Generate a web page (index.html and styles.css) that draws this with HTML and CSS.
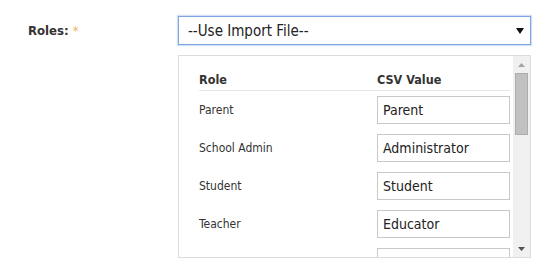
FILE: index.html
```html
<!DOCTYPE html>
<html lang="en">
<head>
<meta charset="utf-8">
<title>Roles</title>
<link rel="stylesheet" href="styles.css">
</head>
<body>
<div class="field">
  <label class="field-label">Roles: <span class="req">*</span></label>
  <div class="field-body">
    <div class="select">
      <span class="select-text">--Use Import File--</span>
      <svg class="select-arrow" width="8" height="6" viewBox="0 0 8 6"><path d="M0 0H8L4 6Z" fill="#111"/></svg>
    </div>
    <div class="panel">
      <div class="panel-content">
        <div class="row head">
          <div class="col-role">Role</div>
          <div class="col-csv">CSV Value</div>
        </div>
        <div class="row">
          <div class="col-role">Parent</div>
          <div class="col-csv"><input class="input" type="text" value="Parent"></div>
        </div>
        <div class="row">
          <div class="col-role">School Admin</div>
          <div class="col-csv"><input class="input" type="text" value="Administrator"></div>
        </div>
        <div class="row">
          <div class="col-role">Student</div>
          <div class="col-csv"><input class="input" type="text" value="Student"></div>
        </div>
        <div class="row">
          <div class="col-role">Teacher</div>
          <div class="col-csv"><input class="input" type="text" value="Educator"></div>
        </div>
        <div class="row">
          <div class="col-role"></div>
          <div class="col-csv"><input class="input" type="text" value=""></div>
        </div>
      </div>
      <div class="scrollbar">
        <div class="sb-btn"><svg width="7" height="4" viewBox="0 0 7 4"><path d="M0 4H7L3.5 0Z" fill="#a3a3a3"/></svg></div>
        <div class="sb-track"><div class="sb-thumb"></div></div>
        <div class="sb-btn"><svg width="7" height="4" viewBox="0 0 7 4"><path d="M0 0H7L3.5 4Z" fill="#505050"/></svg></div>
      </div>
    </div>
  </div>
</div>
</body>
</html>
```
FILE: styles.css
```css
html, body {
  margin: 0;
  padding: 0;
  background: #fff;
}
body {
  font-family: "DejaVu Sans Condensed", "DejaVu Sans", sans-serif;
  font-stretch: condensed;
  color: #333;
  padding-top: 16px;
}
.field {
  display: flex;
  align-items: flex-start;
}
.field-label {
  width: 178px;
  flex: none;
  box-sizing: border-box;
  padding-left: 28px;
  height: 29px;
  line-height: 29px;
  font-size: 13px;
  font-weight: bold;
  color: #333;
}
.req {
  color: #f7b071;
  font-weight: normal;
}
.field-body {
  width: 353px;
  display: flex;
  flex-direction: column;
  gap: 10px;
}
.select {
  height: 29px;
  box-sizing: border-box;
  border: 1px solid #7ea6e0;
  box-shadow: 0 0 1px 1px rgba(126, 166, 224, 0.35);
  display: flex;
  align-items: center;
  justify-content: space-between;
  padding: 0 6px 0 9px;
  font-size: 15px;
  color: #222;
}
.select-arrow {
  display: block;
}
.panel {
  height: 203px;
  box-sizing: border-box;
  border: 1px solid #dcdcdc;
  display: flex;
  overflow: hidden;
}
.panel-content {
  flex: 1;
  padding: 12px 3px 0 20px;
  overflow: hidden;
}
.row {
  display: flex;
  align-items: center;
  padding: 5px 0;
  font-size: 12px;
  color: #333;
}
.row.head {
  padding: 0;
  height: 22px;
  border-bottom: 1px solid #e6e6e6;
  font-weight: bold;
  font-size: 12.5px;
  color: #333;
}
.col-role {
  width: 178px;
  flex: none;
}
.col-csv {
  flex: 1;
}
.input {
  display: block;
  width: 100%;
  height: 28px;
  box-sizing: border-box;
  margin: 0;
  border: 1px solid #c8c8c8;
  padding: 0 5px;
  font-family: inherit;
  font-stretch: condensed;
  font-size: 14px;
  color: #222;
  background: #fff;
  outline: none;
}
.scrollbar {
  width: 17px;
  flex: none;
  background: #f0f0f0;
  display: flex;
  flex-direction: column;
}
.sb-btn {
  height: 17px;
  display: flex;
  align-items: center;
  justify-content: center;
}
.sb-track {
  flex: 1;
  padding: 0 2px;
}
.sb-thumb {
  height: 62px;
  background: #c1c1c1;
  border: 1px solid #adadad;
  box-sizing: border-box;
}
```
